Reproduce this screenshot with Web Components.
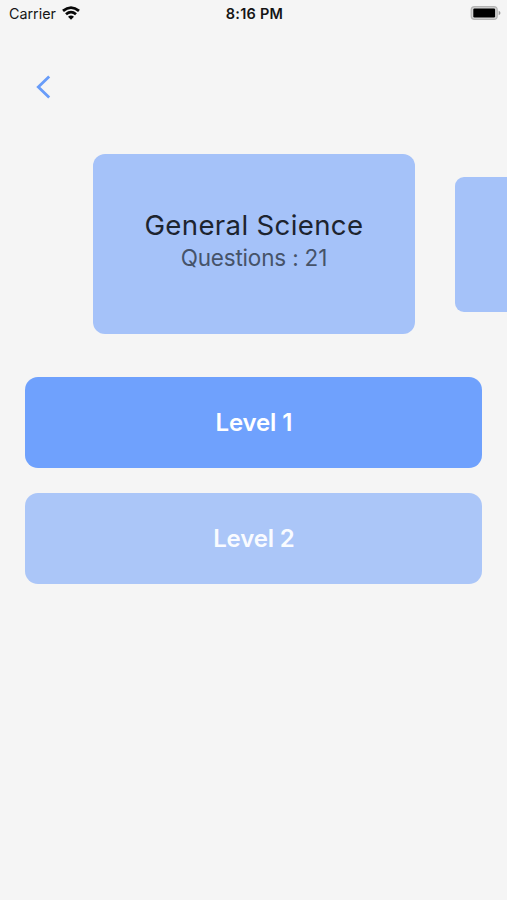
<!DOCTYPE html>
<html lang="en">
<head>
<meta charset="utf-8">
<title>Quiz levels</title>
<style>
html,body{margin:0;background:#f5f5f5}
body{width:507px;height:900px;overflow:hidden;font-family:Inter,"Liberation Sans",sans-serif}
</style>
</head>
<body>
<quiz-screen></quiz-screen>
<script>
const define=(name,html)=>customElements.define(name,class extends HTMLElement{
  constructor(){super();this.attachShadow({mode:'open'}).innerHTML=html;}
});
define('status-bar',`<style>
:host{display:grid;grid-template-columns:1fr auto 1fr;align-items:center;height:26px;padding:0 6px 0 9px;box-sizing:border-box;color:#151515}
.left{display:flex;align-items:center;gap:6px;font-size:14.3px}
.time{font-size:14.5px;font-weight:600;letter-spacing:.25px;padding-right:1px}
.bat{justify-self:end}
svg{display:block}
</style>
<div class="left"><span>Carrier</span>
<svg width="18" height="14" viewBox="0 0 18 14" fill="none" stroke="#080808" stroke-width="2.8"><path d="M1 4.9Q9 -1.7 17 4.9"/><path d="M4 8.2Q9 4 14 8.2"/><path d="M9 13.7L6 10.7Q9 8.3 12 10.7Z" fill="#080808" stroke="none"/></svg></div>
<span class="time">8:16 PM</span>
<svg class="bat" width="31" height="14" viewBox="0 0 31 14"><rect x="1.2" y=".7" width="26" height="12.6" rx="3.4" fill="#d4d4d4" stroke="#b4b4b4" stroke-width="1.2"/><rect x="3.3" y="2.5" width="21.8" height="9" rx="1.2" fill="#000"/><path d="M28.7 4.8Q30.5 5.5 30.5 7T28.7 9.2Z" fill="#999"/></svg>`);
define('back-button',`<style>:host{display:block;height:24px;padding:0 36px}svg{display:block}</style>
<svg width="15" height="24" viewBox="0 0 15 24" fill="none" stroke="#689cf9" stroke-width="2.8"><path d="M13.2 1.5L2.3 12L13.2 22.6"/></svg>`);
define('subject-card',`<style>
:host{display:flex;flex:none;flex-direction:column;align-items:center;box-sizing:border-box;width:321.4px;height:179.5px;border-radius:12px;background:#a5c2f9;padding-top:51px;white-space:nowrap}
:host([side]){width:241px;height:135px;border-radius:9px}
.title{font-size:27.6px;line-height:40px;color:#1d242f;letter-spacing:.34px}
.sub{font-size:22.5px;line-height:26px;color:#465369;letter-spacing:-.18px}
</style><div class="title"><slot name="title"></slot></div><div class="sub"><slot></slot></div>`);
define('subject-carousel',`<style>:host{display:flex;align-items:center;gap:40.5px;padding-left:93.2px;overflow:hidden}</style><slot></slot>`);
define('level-button',`<style>
:host{display:flex;align-items:center;justify-content:center;box-sizing:border-box;height:91.4px;padding-top:1px;border-radius:13px;background:#6fa1fd;color:#fff;font-size:24px;font-weight:600;letter-spacing:-.15px}
:host([locked]){background:#abc6f8;color:#f9fbff}
</style><span><slot></slot></span>`);
define('quiz-screen',`<style>
:host{display:flex;flex-direction:column;height:900px;overflow:hidden;background:#f5f5f5}
back-button{margin-top:49px}
subject-carousel{margin-top:55.4px}
.levels{display:flex;flex-direction:column;gap:24.5px;padding:42.8px 24.6px 0 25.3px}
</style>
<status-bar></status-bar><back-button></back-button>
<subject-carousel><subject-card><span slot="title">General Science</span>Questions : 21</subject-card><subject-card side></subject-card></subject-carousel>
<div class="levels"><level-button>Level 1</level-button><level-button locked>Level 2</level-button></div>`);
</script>
</body>
</html>
